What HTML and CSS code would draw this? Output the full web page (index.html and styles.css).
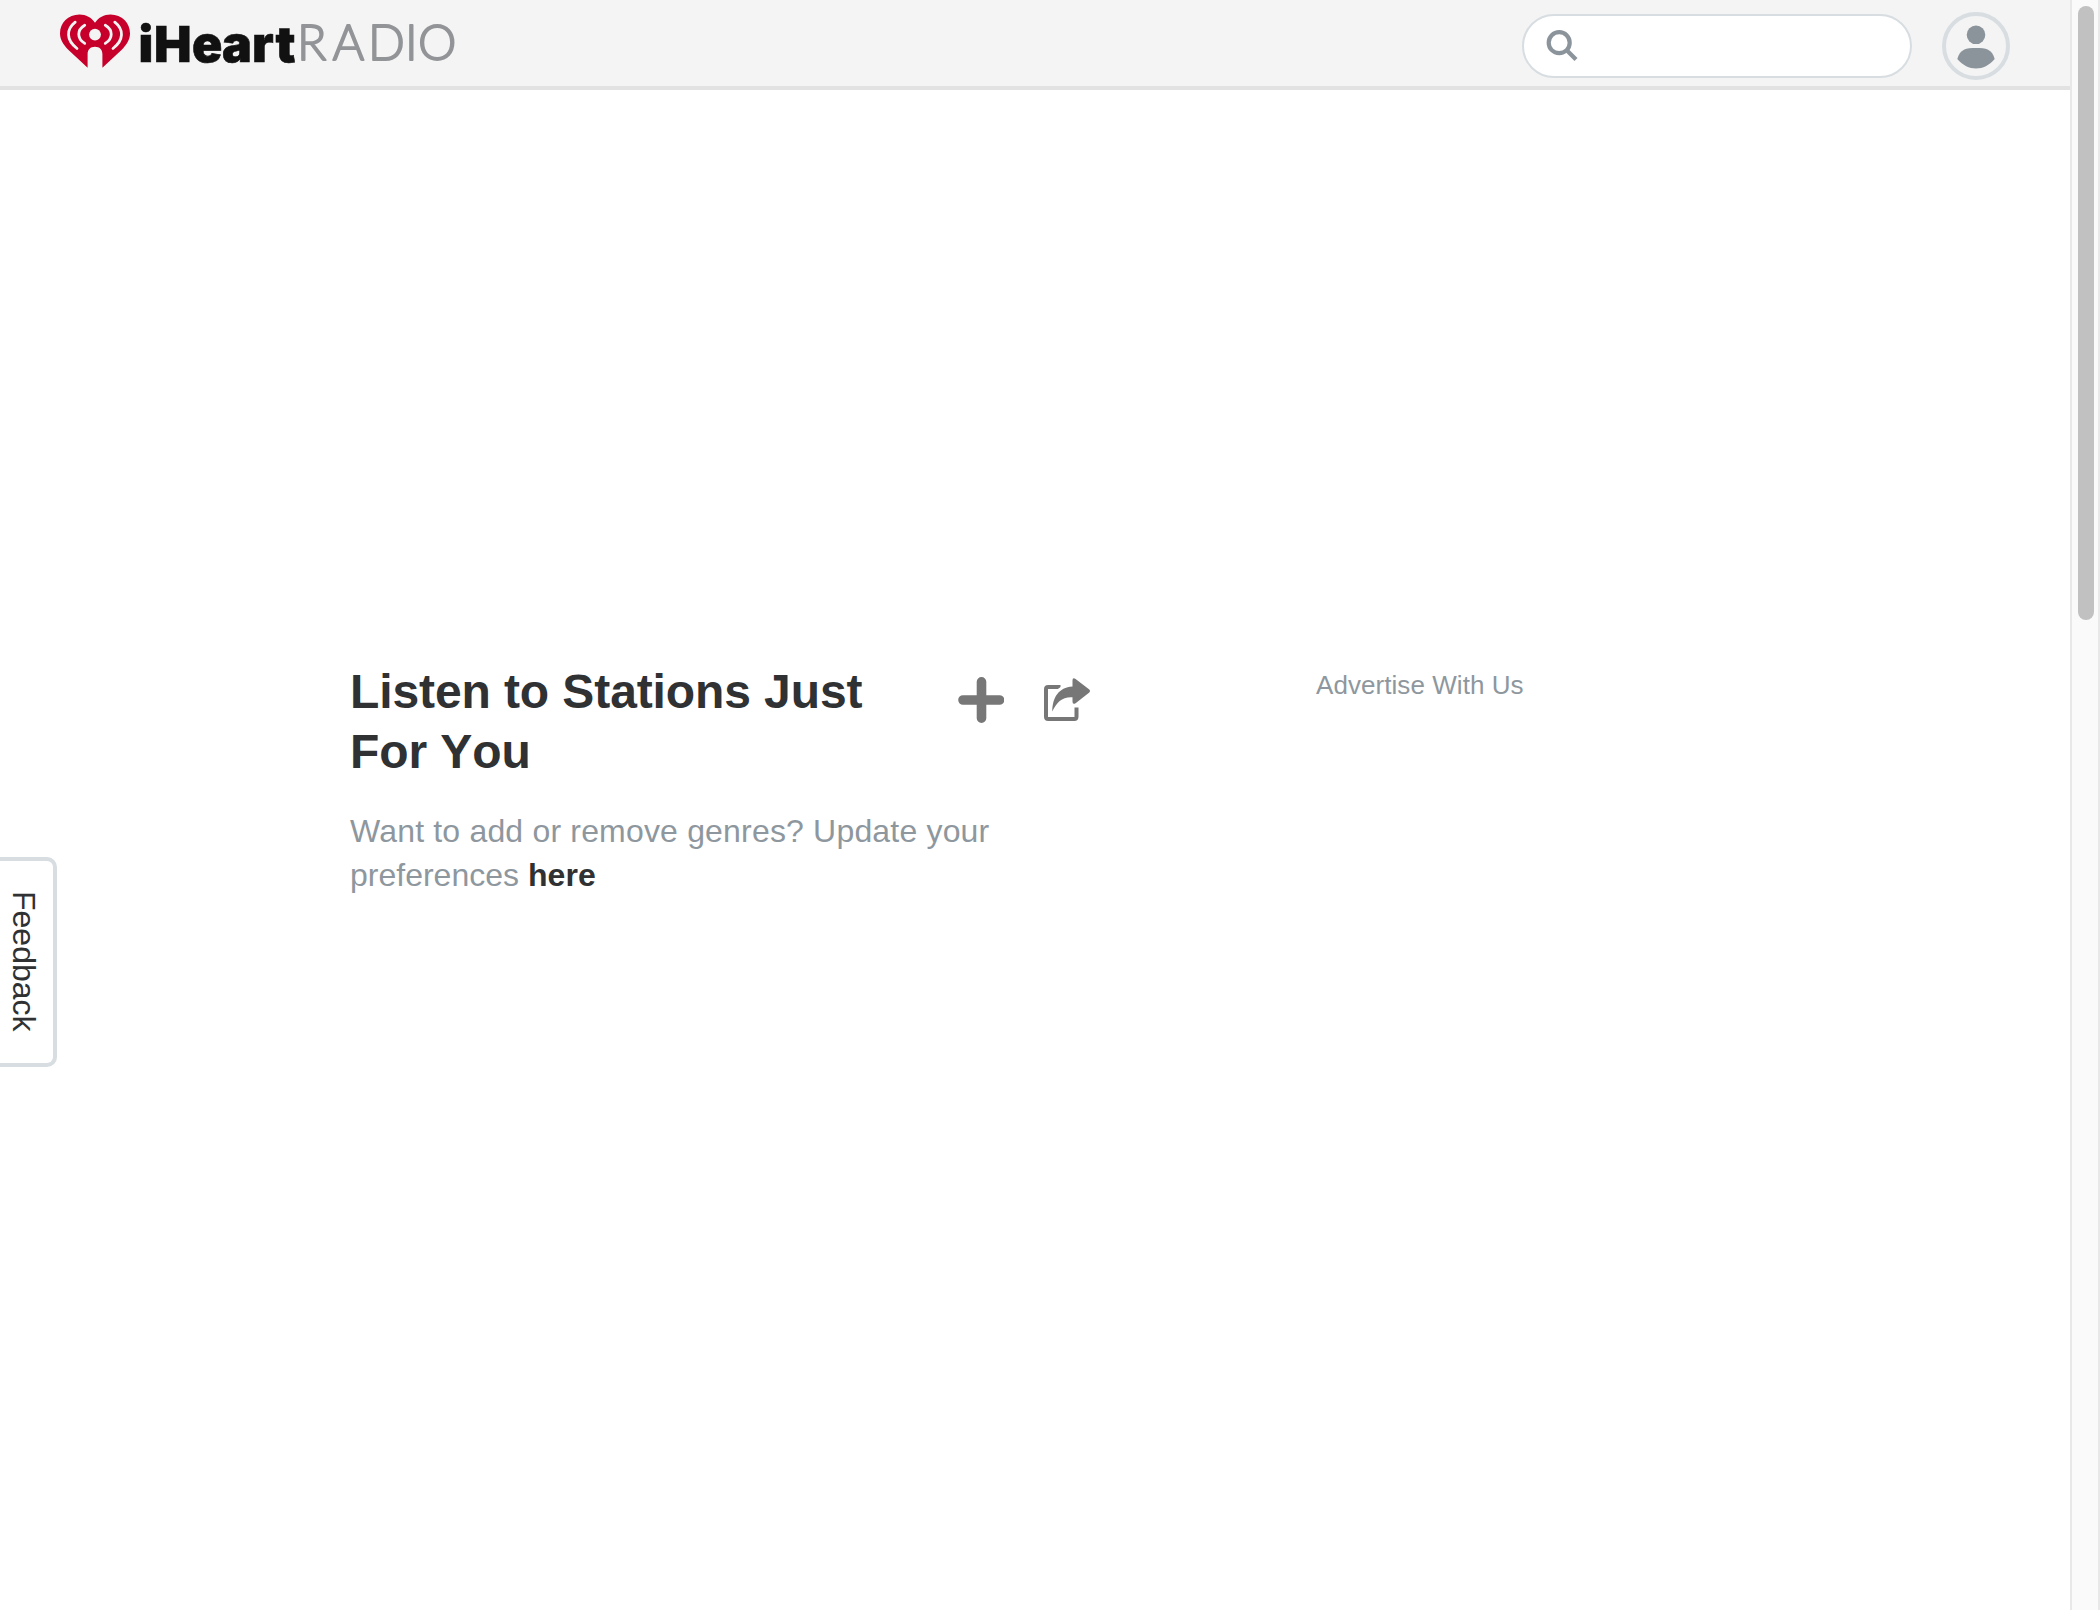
FILE: index.html
```html
<!DOCTYPE html>
<html lang="en">
<head>
<meta charset="utf-8">
<title>iHeartRadio</title>
<link rel="stylesheet" href="styles.css">
</head>
<body>
<div class="page">
  <header class="header">
    <a class="logo" aria-label="iHeartRadio">
      <svg class="logo-art" width="420" height="80" viewBox="60 2 420 80">
        <path class="heart" d="M95 22.8C91.500 17.500 86 14.500 79.500 14.500C68 14.500 60 22.800 60 33.500C60 40 63.500 44.500 68 49.500L87.600 67.700V54C87.600 49.500 90.500 46.700 95 46.700C99.500 46.700 102.400 49.500 102.400 54V67.700L122 49.500C126.500 44.500 130 40 130 33.500C130 22.800 122 14.500 110.500 14.500C104 14.500 98.500 17.500 95 22.800Z"/>
        <circle class="hole" cx="95" cy="34.600" r="5.900"/>
        <path class="wave" d="M84.700 25.300C76.800 30 76.800 38.500 84.700 43.400M105.300 25.300C113.200 30 113.200 38.500 105.300 43.400M75.200 22.200C66 29.500 66 40 77 48.500M114.800 22.200C124 29.500 124 40 113 48.500"/>
        <text class="word-heavy" y="61.700"><tspan x="138.500">i</tspan><tspan x="154">H</tspan><tspan x="192">e</tspan><tspan x="222">a</tspan><tspan x="252">r</tspan><tspan x="275.500">t</tspan></text>
        <text class="word-light" y="59.600"><tspan x="297">R</tspan><tspan x="332.500">A</tspan><tspan x="368">D</tspan><tspan x="405">I</tspan><tspan x="418">O</tspan></text>
      </svg>
    </a>
    <div class="tools">
      <label class="search">
        <svg width="34" height="34" viewBox="0 0 34 34"><circle cx="13.200" cy="13.700" r="10.500"/><path d="M20.500 21L30 30.500"/></svg>
      </label>
      <a class="avatar" aria-label="Account">
        <svg width="40" height="46" viewBox="0 0 40 46"><circle cx="20" cy="11.800" r="9.300"/><path d="M20 25C30 25 36 26 38.700 36C33 42.500 27 45.500 20 45.500C13 45.500 7 42.500 1.300 36C4 26 10 25 20 25Z"/></svg>
      </a>
    </div>
  </header>
  <main class="content">
    <section class="station">
      <div class="title-row">
        <h1 class="title">Listen to Stations Just<br>For You</h1>
        <div class="actions">
          <svg width="46" height="46" viewBox="0 0 46 46"><path class="plus" d="M23.500 4.800V41.200M5 23H41.500"/></svg>
          <svg width="48" height="46" viewBox="0 0 48 46"><path class="box" d="M16.500 10H4.200Q2 10 2 12.200V39.800Q2 42 4.200 42H30.300Q32.500 42 32.500 39.800V30.500"/><path class="gap" d="M8.300 34.600C8.500 20.500 14.500 10.500 28.500 9.500V3.500Q28.500 0 31.600 2L45.300 12.500Q47 14 45.300 15.500L31.600 26.200Q28.500 28 28.500 24.500V20.200C18.500 19.500 12.500 25 8.300 34.600Z"/><path class="arrow" d="M8.300 34.600C8.500 20.500 14.500 10.500 28.500 9.500V3.500Q28.500 0 31.600 2L45.300 12.500Q47 14 45.300 15.500L31.600 26.200Q28.500 28 28.500 24.500V20.200C18.500 19.500 12.500 25 8.300 34.600Z"/></svg>
        </div>
      </div>
      <p class="note"><span class="note-lead">Want to add or remove genres? Update your</span><br>preferences <a class="here">here</a></p>
    </section>
    <aside class="aside"><a class="advertise">Advertise With Us</a></aside>
  </main>
  <a class="feedback">Feedback</a>
</div>
<div class="scroll-track"><div class="scroll-thumb"></div></div>
</body>
</html>
```

FILE: styles.css
```css
* { box-sizing: border-box; }
body {
  margin: 0;
  height: 1610px;
  display: flex;
  overflow: hidden;
  background: #fff;
  font-family: "Liberation Sans", Helvetica, Arial, sans-serif;
}
.page { width: 2070px; height: 1610px; position: relative; }
.header {
  height: 90px;
  padding: 2px 60px 0;
  display: flex;
  justify-content: space-between;
  align-items: flex-start;
  background: #f4f4f4;
  border-bottom: 4px solid #e2e2e2;
}
.logo, .logo-art { display: block; }
.heart { fill: #c6002b; }
.hole { fill: #f4f4f4; }
.wave { fill: none; stroke: #f4f4f4; stroke-width: 2.8; stroke-linecap: round; }
.word-heavy { font: 900 50px Inter, sans-serif; fill: #111; stroke: #111; stroke-width: 0.6; }
.word-light { font: 300 48.5px Lato, sans-serif; fill: #929497; stroke: #929497; stroke-width: 1.8; stroke-linejoin: round; }
.tools { display: flex; gap: 30px; padding-top: 10px; }
.search {
  width: 390px;
  height: 64px;
  margin-top: 2px;
  padding: 13px 22px;
  border: 2px solid #d7dde1;
  border-radius: 32px;
  background: #fff;
}
.search svg { display: block; fill: none; stroke: #8b949b; stroke-width: 4.2; }
.avatar {
  width: 68px;
  height: 68px;
  display: flex;
  align-items: center;
  justify-content: center;
  border: 4px solid #d7dde1;
  border-radius: 50%;
}
.avatar svg { fill: #8b949b; }
.content { display: flex; padding: 572px 0 0 350px; }
.station { width: 966px; }
.title-row { display: flex; }
.title {
  width: 608px;
  margin: 0;
  font-size: 48px;
  line-height: 60px;
  letter-spacing: -0.1px;
  font-kerning: none;
  color: #2f3133;
}
.actions { display: flex; gap: 40px; padding-top: 15px; }
.actions svg { display: block; }
.plus { fill: none; stroke: #777; stroke-width: 9.6; stroke-linecap: round; }
.box { fill: none; stroke: #777; stroke-width: 4; }
.gap { fill: #fff; stroke: #fff; stroke-width: 6; }
.arrow { fill: #777; }
.note { margin: 27px 0 0; font-size: 32px; line-height: 44px; color: #8e979e; }
.note-lead { letter-spacing: 0.18px; }
.here { font-weight: bold; letter-spacing: 0.1px; color: #2f3133; }
.aside { padding-top: 8px; }
.advertise { font-size: 26px; line-height: 30px; letter-spacing: 0.06px; color: #8e979e; }
.feedback {
  position: absolute;
  left: 0;
  top: 857px;
  width: 57px;
  height: 210px;
  padding: 0 7px 1px 0;
  display: flex;
  align-items: center;
  justify-content: center;
  border: 4px solid #d7dde1;
  border-left: 0;
  border-radius: 0 10px 10px 0;
  background: #fff;
  writing-mode: vertical-rl;
  font-size: 32px;
  color: #2f3133;
}
.scroll-track {
  width: 30px;
  height: 1610px;
  padding: 6px 4px 0 6px;
  border: solid #e8e8e8;
  border-width: 0 2px;
  background: #fafafa;
}
.scroll-thumb { width: 16px; height: 614px; border-radius: 8px; background: #c1c1c1; }
```
